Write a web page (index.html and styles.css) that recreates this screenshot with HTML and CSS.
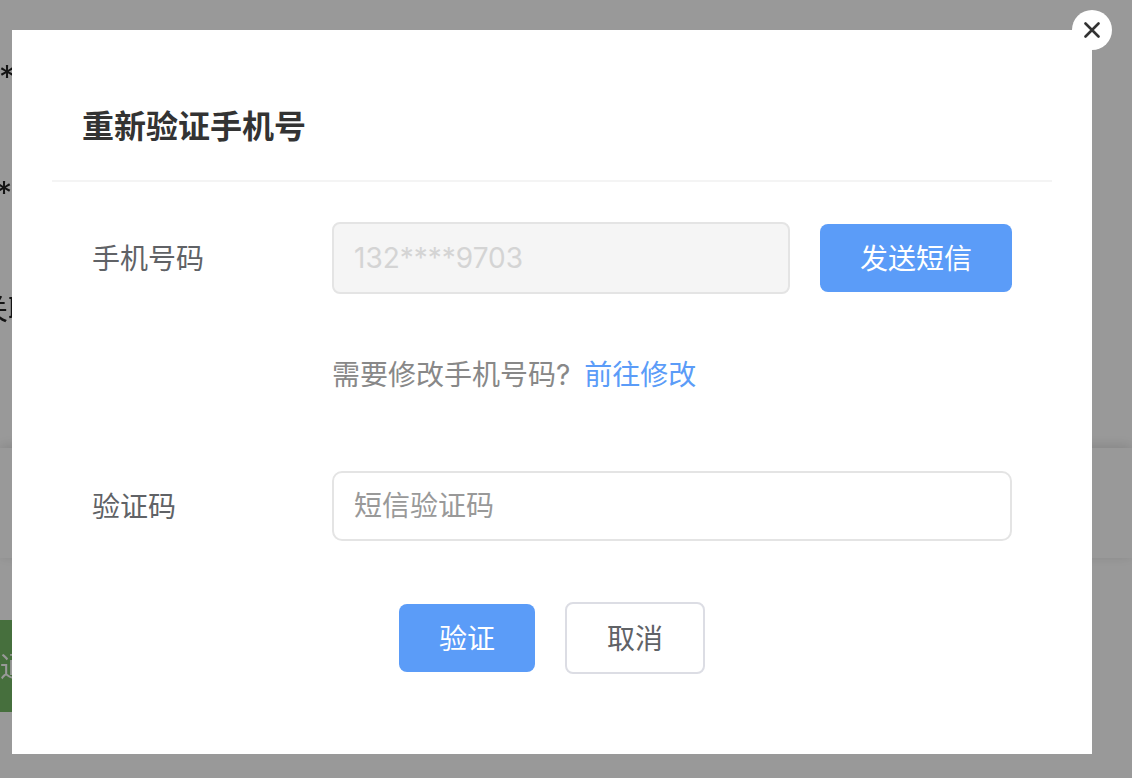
FILE: index.html
```html
<!DOCTYPE html>
<html lang="zh-CN">
<head>
    <meta charset="UTF-8">
    <meta name="viewport" content="width=device-width, initial-scale=1.0">
    <title>重新验证手机号</title>
    <link rel="stylesheet" href="styles.css">
</head>
<body>
    <div class="page">
        <div class="page-info">
            <p class="info-line">*</p>
            <p class="info-line short">*</p>
            <p class="info-line clipped">关联</p>
        </div>
        <div class="page-bar"></div>
        <button type="button" class="page-pass">通</button>
    </div>

    <div class="overlay">
        <div class="dialog" role="dialog" aria-labelledby="dialogTitle">
            <button type="button" class="dialog-close" aria-label="关闭">
                <svg width="16" height="16" viewBox="0 0 16 16" fill="none" stroke="#333" stroke-width="2.6" stroke-linecap="round">
                    <path d="M1.5 1.5L14.5 14.5M14.5 1.5L1.5 14.5"/>
                </svg>
            </button>
            <h1 class="dialog-title" id="dialogTitle">重新验证手机号</h1>
            <form class="form">
                <div class="form-row">
                    <label class="form-label" for="phone">手机号码</label>
                    <input class="input" type="text" id="phone" value="132****9703" disabled>
                    <button type="button" class="button primary">发送短信</button>
                </div>
                <p class="form-hint">需要修改手机号码? <a class="link" href="#">前往修改</a></p>
                <div class="form-row">
                    <label class="form-label" for="code">验证码</label>
                    <input class="input code" type="text" id="code" placeholder="短信验证码">
                </div>
                <div class="form-actions">
                    <button type="submit" class="button primary">验证</button>
                    <button type="button" class="button plain">取消</button>
                </div>
            </form>
        </div>
    </div>
</body>
</html>
```
FILE: styles.css
```css
* {
    box-sizing: border-box;
}
body {
    margin: 0;
    background: #fff;
    color: #222;
    font-family: Inter, "Noto Sans CJK SC", sans-serif;
    font-size: 28px;
    line-height: 40px;
}
button, input {
    font: inherit;
}

/* page behind the dialog */
.page {
    position: fixed;
    inset: 0;
    overflow: hidden;
}
.page-info {
    height: 448px;
    padding-top: 58px;
}
.info-line {
    margin: 0 0 76px;
    font-size: 32px;
    text-indent: -1px;
}
.info-line.short {
    text-indent: -4px;
}
.info-line.clipped {
    font-size: 28px;
    text-indent: -20px;
}
.page-bar {
    height: 110px;
    background: #fff;
    box-shadow: 0 -2px 12px rgba(0, 0, 0, 0.14);
}
.page-pass {
    display: block;
    height: 92px;
    margin-top: 62px;
    padding: 2px 40px 0 0;
    border: none;
    background: #75b966;
    color: #fff;
}

/* dialog */
.overlay {
    position: fixed;
    inset: 0;
    padding: 30px 40px 24px 12px;
    background: rgba(0, 0, 0, 0.4);
    overflow: auto;
}
.dialog {
    position: relative;
    padding: 0 40px;
    background: #fff;
}
.dialog-close {
    position: absolute;
    top: -20px;
    right: -20px;
    display: flex;
    align-items: center;
    justify-content: center;
    width: 40px;
    height: 40px;
    padding: 0;
    border: none;
    border-radius: 50%;
    background: #fff;
    cursor: pointer;
}
.dialog-title {
    margin: 0;
    padding: 73px 30px 29px;
    border-bottom: 2px solid #f4f4f4;
    color: #333;
    font-size: 32px;
    font-weight: 600;
    line-height: 48px;
}

/* form */
.form {
    padding: 40px 40px 80px;
}
.form-row {
    display: flex;
    align-items: center;
}
.form-label {
    flex: 0 0 240px;
    padding-top: 2px;
    color: #606266;
}
.input {
    flex: 1;
    min-width: 0;
    height: 72px;
    padding: 0 20px;
    border: 2px solid #e4e4e4;
    border-radius: 8px;
    background: #fff;
    color: #333;
}
.input.code {
    height: 70px;
    border-radius: 10px;
}
.input::placeholder {
    color: #999;
    opacity: 1;
}
.input:disabled {
    background: #f5f5f5;
    color: #d4d4d4;
}
.form-row .button {
    margin-left: 30px;
}
.form-hint {
    margin: 61px 0 76px 240px;
    color: #888;
}
.link {
    margin-left: 6px;
    color: #5b9cf8;
    text-decoration: none;
}
.button {
    height: 68px;
    padding: 2px 40px 0;
    border: none;
    border-radius: 8px;
    cursor: pointer;
}
.button.primary {
    background: #5b9cf8;
    color: #fff;
}
.button.plain {
    height: 72px;
    border: 2px solid #dcdde4;
    background: #fff;
    color: #606266;
}
.form-actions {
    display: flex;
    align-items: center;
    justify-content: center;
    gap: 30px;
    margin-top: 61px;
}
```
